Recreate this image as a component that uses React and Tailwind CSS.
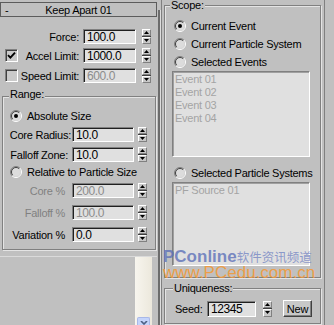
import React from 'react';

const Spinner = ({ className = '' }) => (
  <div className={`flex w-[9px] flex-col ${className}`}>
    <div className="flex flex-1 items-center justify-center border border-t-white border-l-white border-r-[#808080] border-b-[#808080] bg-[#c8c8c8]">
      <svg width="5" height="3" viewBox="0 0 5 3"><path d="M2.5 0 L5 3 L0 3Z" fill="#000" /></svg>
    </div>
    <div className="h-px bg-[#404040]" />
    <div className="flex flex-1 items-center justify-center border border-t-white border-l-white border-r-[#808080] border-b-[#808080] bg-[#c8c8c8]">
      <svg width="5" height="3" viewBox="0 0 5 3"><path d="M0 0 L5 0 L2.5 3Z" fill="#000" /></svg>
    </div>
  </div>
);

const Field = ({ value, disabled = false, className = '' }) => (
  <div
    className={`flex items-center border border-t-[#808080] border-l-[#808080] border-r-white border-b-white bg-[#e0e0e0] pl-[3px] text-[12px] tracking-[-0.4px] shadow-[inset_1px_1px_0_#202020] ${
      disabled ? 'text-[#8c8c8c]' : 'text-black'
    } ${className}`}
  >
    {value}
  </div>
);

const Checkbox = ({ checked = false }) => (
  <div className="flex h-[13px] w-[13px] items-center justify-center border border-t-[#808080] border-l-[#808080] border-r-white border-b-white bg-[#cacaca] shadow-[inset_1px_1px_0_#404040]">
    {checked && (
      <svg width="9" height="9" viewBox="0 0 9 9">
        <path d="M1 4.2 L3.4 6.6 L8 1.6" stroke="#000" strokeWidth="1.9" fill="none" />
      </svg>
    )}
  </div>
);

const Radio = ({ checked = false }) => (
  <svg width="12" height="12" viewBox="0 0 12 12" className="shrink-0">
    <circle cx="6" cy="6" r="4.5" fill="#dcdcdc" />
    <path d="M2.1 9.9 A5.5 5.5 0 0 1 9.9 2.1" stroke="#808080" fill="none" />
    <path d="M9.9 2.1 A5.5 5.5 0 0 1 2.1 9.9" stroke="#ffffff" fill="none" />
    <path d="M2.8 9.2 A4.5 4.5 0 0 1 9.2 2.8" stroke="#404040" fill="none" />
    <path d="M9.2 2.8 A4.5 4.5 0 0 1 2.8 9.2" stroke="#d8d8d8" fill="none" />
    {checked && <circle cx="6" cy="6" r="2" fill="#000" />}
  </svg>
);

const RadioRow = ({ label, checked, className = '' }) => (
  <div className={`flex h-[12px] items-center ${className}`}>
    <Radio checked={checked} />
    <span className="ml-[5px] whitespace-nowrap">{label}</span>
  </div>
);

const Group = ({ title, titleClass = '', className = '', children }) => (
  <div className={`flex flex-col border border-[#808080] shadow-[1px_1px_0_#e4e4e4,inset_1px_1px_0_#e4e4e4] ${className}`}>
    <span className={`w-fit bg-[#c0c0c0] px-px leading-[12px] ${titleClass}`}>{title}</span>
    {children}
  </div>
);

const ListBox = ({ items, className = '' }) => (
  <div className={`flex flex-col border border-t-[#808080] border-l-[#808080] border-r-white border-b-white bg-[#e0e0e0] pt-px pl-[2px] text-[#a4a4a4] shadow-[inset_1px_1px_0_#a0a0a0] ${className}`}>
    {items.map((it) => (
      <div key={it} className="leading-[13px]">{it}</div>
    ))}
  </div>
);

const TopRow = ({ label, value, check, disabled, className = '' }) => (
  <div className={`flex h-[15px] items-center ${className}`}>
    <div className="flex w-[79px] items-center">
      {check !== undefined && (
        <div className="ml-[5px]">
          <Checkbox checked={check} />
        </div>
      )}
      <span className="ml-auto whitespace-nowrap">{label}</span>
    </div>
    <Field value={value} disabled={disabled} className="ml-[4px] h-[15px] w-[53px]" />
    <Spinner className="ml-[6px] h-[15px]" />
  </div>
);

const RangeRow = ({ label, value, disabled, pad, className = '' }) => (
  <div className={`flex h-[15px] items-center ${className}`}>
    <span className={`w-[69px] whitespace-nowrap text-right ${pad} ${disabled ? 'text-[#808080]' : ''}`}>{label}</span>
    <Field value={value} disabled={disabled} className="h-[15px] w-[62px]" />
    <Spinner className="ml-[4px] h-[15px]" />
  </div>
);

export default function App() {
  return (
    <div className="relative flex h-[325px] w-[334px] overflow-hidden bg-[#c0c0c0] font-['Liberation_Sans',Arial,sans-serif] text-[11px] leading-[12px] tracking-[-0.25px] text-black">
      {/* left rollout */}
      <div className="flex w-[157px] flex-col">
        <div className="mt-[2px] flex h-[15px] items-center border border-[#5c5c5c]">
          <span className="ml-[4px] w-[10px]">-</span>
          <span className="flex-1 pr-[14px] text-center">Keep Apart 01</span>
        </div>

        <TopRow label="Force:" value="100.0" className="mt-[12px]" />
        <TopRow label="Accel Limit:" value="1000.0" check={true} className="mt-[4px]" />
        <TopRow label="Speed Limit:" value="600.0" check={false} disabled className="mt-[5px]" />

        <Group title="Range:" titleClass="-mt-[9px] ml-[6px]" className="ml-[2px] mt-[13px] h-[154px] w-[154px]">
          <RadioRow label="Absolute Size" checked className="ml-[7px] mt-[10px]" />
          <RangeRow label="Core Radius:" value="10.0" pad="pr-[1px]" className="mt-[5px]" />
          <RangeRow label="Falloff Zone:" value="10.0" pad="pr-[4px]" className="mt-[5px]" />
          <RadioRow label="Relative to Particle Size" className="ml-[7px] mt-[4px]" />
          <RangeRow label="Core %" value="200.0" disabled pad="pr-[7px]" className="mt-[5px]" />
          <RangeRow label="Falloff %" value="100.0" disabled pad="pr-[7px]" className="mt-[7px]" />
          <RangeRow label="Variation %" value="0.0" pad="pr-[7px]" className="mt-[7px]" />
        </Group>

        <div className="mt-[6px] flex flex-1 border-t border-[#dadada]">
          <div className="w-[135px]" />
          <div className="flex w-[17px] flex-col justify-end bg-gradient-to-r from-[#f7f5ee] to-[#ece8dc]">
            <div className="mx-[2px] flex h-[8px] items-end justify-center rounded-t-[2px] border border-b-0 border-[#a8b8e8] bg-[#c4d4fb]">
              <svg width="8" height="4" viewBox="0 0 8 4">
                <path d="M1 0 L4 3 L7 0" stroke="#4d6185" strokeWidth="1.6" fill="none" />
              </svg>
            </div>
          </div>
        </div>
      </div>

      {/* separator */}
      <div className="ml-px mt-[10px] w-[3px] border-l-2 border-r border-l-[#6c6c6c] border-r-[#dedede]" />

      {/* right rollout */}
      <div className="flex w-[164px] flex-col border-x border-[#808080]">
        <Group title="Scope:" titleClass="-mt-[7px] ml-[5px]" className="ml-[2px] mt-[5px] h-[273px] w-[157px]">
          <RadioRow label="Current Event" checked className="ml-[9px] mt-[9px]" />
          <RadioRow label="Current Particle System" className="ml-[9px] mt-[6px]" />
          <RadioRow label="Selected Events" className="ml-[9px] mt-[6px]" />
          <ListBox items={['Event 01', 'Event 02', 'Event 03', 'Event 04']} className="ml-[7px] mt-[3px] h-[86px] w-[138px]" />
          <RadioRow label="Selected Particle Systems" className="ml-[9px] mt-[10px]" />
          <ListBox items={['PF Source 01']} className="ml-[7px] mt-[3px] h-[84px] w-[138px]" />
        </Group>

        <Group title="Uniqueness:" titleClass="-mt-[7px] ml-[8px]" className="ml-[2px] mt-[10px] h-[36px] w-[157px]">
          <div className="mt-[6px] flex h-[17px] items-center">
            <span className="ml-[10px] w-[32px]">Seed:</span>
            <Field value="12345" className="h-[16px] w-[49px]" />
            <Spinner className="ml-[7px] h-[16px]" />
            <div className="ml-[11px] flex h-[17px] w-[29px] items-center justify-center border border-t-white border-l-white border-r-[#404040] border-b-[#404040] bg-[#c8c8c8] shadow-[inset_-1px_-1px_0_#808080]">
              New
            </div>
          </div>
        </Group>
      </div>

      {/* site watermark over the capture */}
      <div className="pointer-events-none absolute left-[163px] top-[248px] flex items-baseline whitespace-nowrap leading-[17px] tracking-normal">
        <span className="text-[17px] font-bold text-[#5d70b8]/80">PConline</span>
        <span className="font-['Noto_Sans_CJK_SC',sans-serif] text-[12.5px] text-[#7485c3]/80">软件资讯频道</span>
      </div>
      <div className="pointer-events-none absolute left-[163px] top-[264px] whitespace-nowrap text-[17px] leading-[17px] tracking-normal text-[#f29a38]/90">
        www.PCedu.com.cn
      </div>
    </div>
  );
}
